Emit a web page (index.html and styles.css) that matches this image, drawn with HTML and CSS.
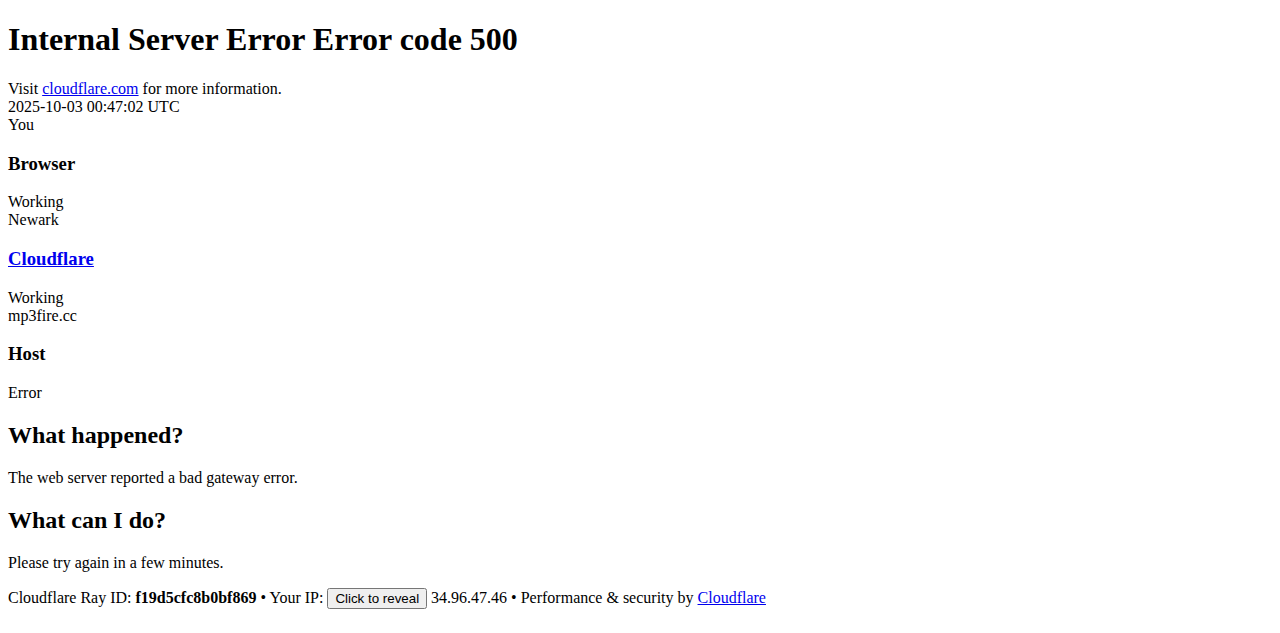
FILE: index.html
```html
<!DOCTYPE html>
<html lang="en">
<head>
<meta charset="utf-8">
<title>mp3fire.cc | 500: Internal server error</title>
<link rel="stylesheet" href="styles.css">
</head>
<body class="page">
<div class="wrapper">
  <h1 class="title"><span>Internal Server Error</span> <span>Error code 500</span></h1>
  <div class="info">
    <div>Visit <a href="#">cloudflare.com</a> for more information.</div>
    <div>2025-10-03 00:47:02 UTC</div>
  </div>
  <div class="status">
    <div>
      <span>You</span>
      <h3 class="node-title">Browser</h3>
      <span>Working</span>
    </div>
    <div>
      <span>Newark</span>
      <h3 class="node-title"><a href="#">Cloudflare</a></h3>
      <span>Working</span>
    </div>
    <div>
      <span>mp3fire.cc</span>
      <h3 class="node-title">Host</h3>
      <span>Error</span>
    </div>
  </div>
  <div class="explain">
    <h2>What happened?</h2>
    <p>The web server reported a bad gateway error.</p>
    <h2>What can I do?</h2>
    <p>Please try again in a few minutes.</p>
  </div>
  <p class="footer">
    <span>Cloudflare Ray ID: <strong>f19d5cfc8b0bf869</strong></span>
    <span>•</span>
    <span>Your IP: <button type="button" class="reveal">Click to reveal</button> <span>34.96.47.46</span> <span>•</span></span>
    <span>Performance &amp; security by</span> <a href="#">Cloudflare</a>
  </p>
</div>
</body>
</html>
```

FILE: styles.css
```css
.page {
  margin: 0;
  padding: 8px;
  font-family: "Liberation Serif", "Times New Roman", serif;
  font-size: 16px;
  color: #000;
  background: #fff;
}
.page a {
  color: #0000ee;
}
.title {
  margin-top: 13.44px;
}
.status > div > span {
  display: block;
}
.reveal {
  font-family: "Liberation Sans", Arial, sans-serif;
  font-size: 13.333px;
}
```
